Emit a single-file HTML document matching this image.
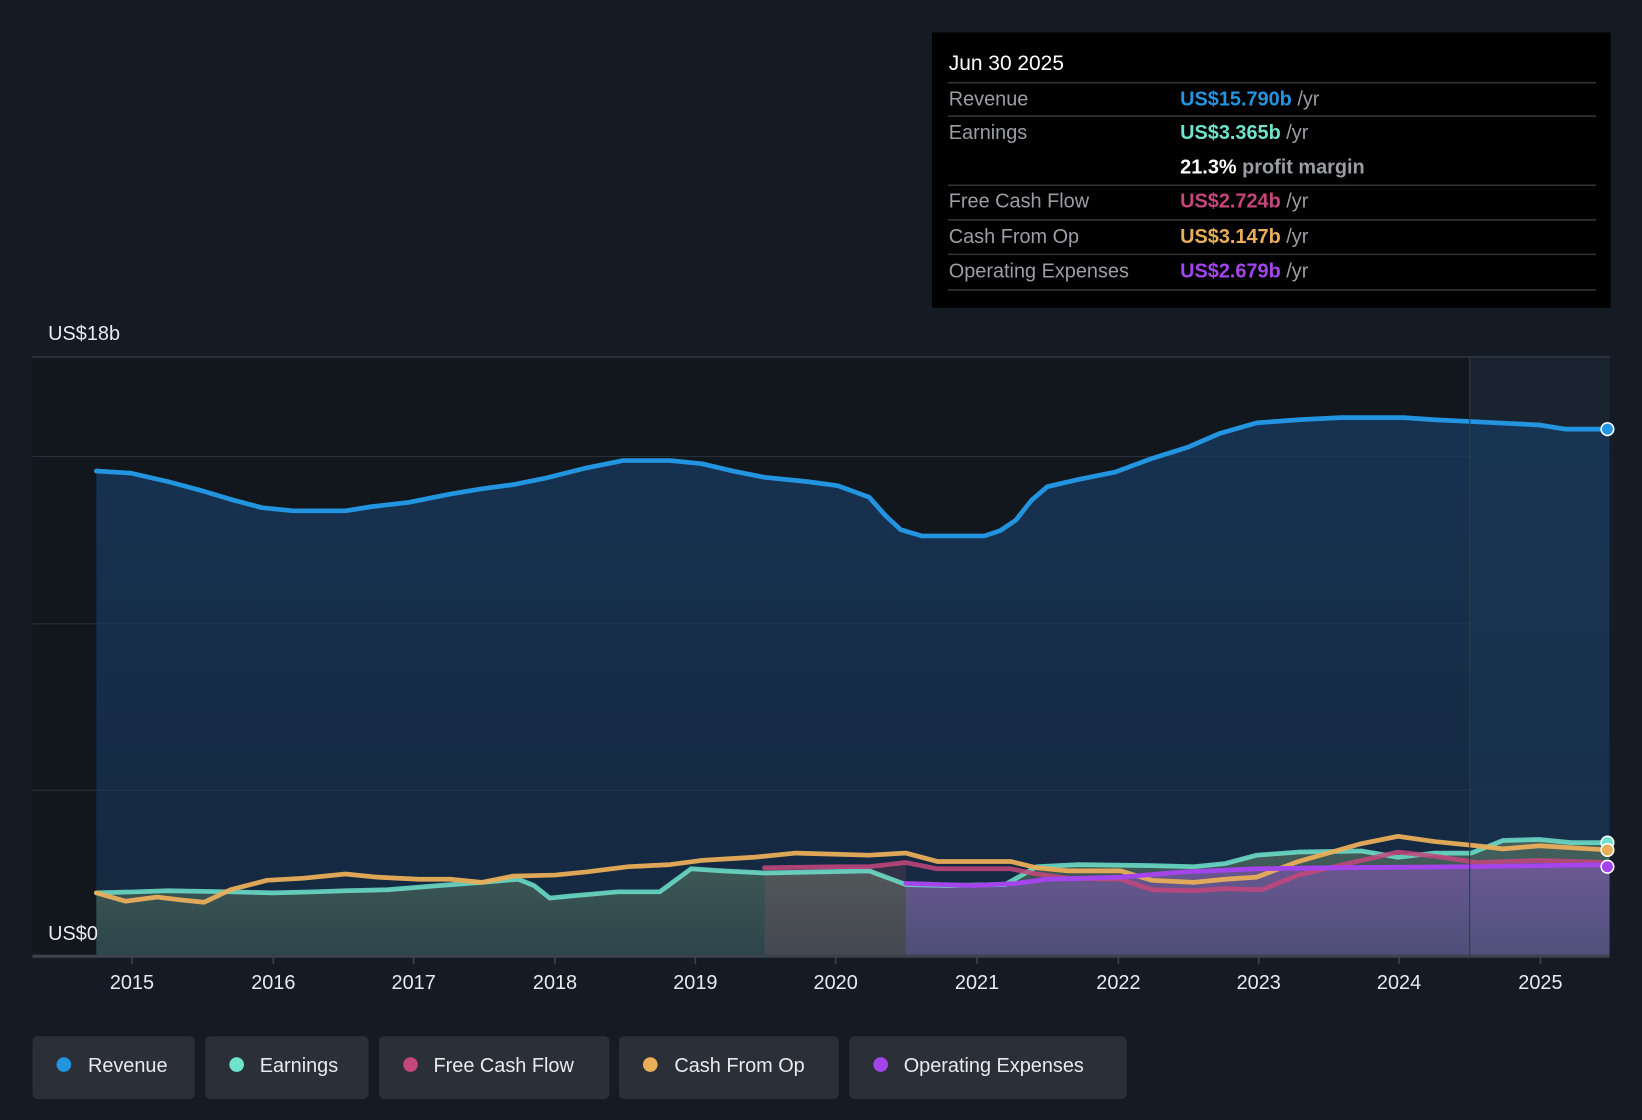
<!DOCTYPE html>
<html><head><meta charset="utf-8"><style>
html,body{margin:0;padding:0;background:#151b24;width:1642px;height:1120px;overflow:hidden}
svg{display:block}
text{font-family:"Liberation Sans",sans-serif}
</style></head><body>
<svg width="1642" height="1120" viewBox="0 0 1568 1070" preserveAspectRatio="none" xmlns="http://www.w3.org/2000/svg">
<defs>
<linearGradient id="gr" x1="0" y1="0" x2="0" y2="1"><stop offset="0" stop-color="#17375a" stop-opacity="0.85"/><stop offset="1" stop-color="#17375a" stop-opacity="0.55"/></linearGradient>
<linearGradient id="ge" x1="0" y1="0" x2="0" y2="1"><stop offset="0" stop-color="#6a8a6c" stop-opacity="0.55"/><stop offset="1" stop-color="#5a7a64" stop-opacity="0.35"/></linearGradient>
<linearGradient id="gp" x1="0" y1="0" x2="0" y2="1"><stop offset="0" stop-color="#9e55d8" stop-opacity="0.45"/><stop offset="1" stop-color="#8a60c8" stop-opacity="0.35"/></linearGradient>
</defs>
<rect width="1568" height="1070" fill="#151b24"/>
<rect x="31" y="341" width="1506" height="572" fill="#12161d"/>
<rect x="1403" y="341" width="134" height="572" fill="#1a2430"/>
<g stroke="#2c333d" stroke-width="1">
<line x1="31" y1="341" x2="1537" y2="341" stroke="#3a414b"/>
<line x1="31" y1="436" x2="1537" y2="436"/>
<line x1="31" y1="596" x2="1537" y2="596"/>
<line x1="31" y1="755" x2="1537" y2="755"/>
</g>
<path id="rev" d="M92,450 L125,452 L160,460 L190,468 L220,477 L250,485 L280,488 L330,488 L355,484 L390,480 L430,472 L460,467 L490,463 L520,457 L560,447 L595,440 L640,440 L670,443 L700,450 L730,456 L770,460 L800,464 L830,475 L845,492 L860,506 L880,512 L940,512 L955,507 L970,497 L985,478 L1000,465 L1030,458 L1065,451 L1100,438 L1135,427 L1165,414 L1200,404 L1240,401 L1280,399 L1340,399 L1370,401 L1410,403 L1470,406 L1495,410 L1535,410" fill="none"/>
<path d="M92,450 L125,452 L160,460 L190,468 L220,477 L250,485 L280,488 L330,488 L355,484 L390,480 L430,472 L460,467 L490,463 L520,457 L560,447 L595,440 L640,440 L670,443 L700,450 L730,456 L770,460 L800,464 L830,475 L845,492 L860,506 L880,512 L940,512 L955,507 L970,497 L985,478 L1000,465 L1030,458 L1065,451 L1100,438 L1135,427 L1165,414 L1200,404 L1240,401 L1280,399 L1340,399 L1370,401 L1410,403 L1470,406 L1495,410 L1537,410 L1537,913 L92,913Z" fill="url(#gr)"/>
<path d="M92,853 L130,852 L160,851 L220,852 L260,853 L300,852 L330,851 L370,850 L420,846 L460,843 L495,840 L510,846 L525,858 L545,856 L590,852 L630,852 L660,830 L690,832 L730,834 L830,832 L865,845 L905,846 L960,845 L990,828 L1030,826 L1100,827 L1140,828 L1170,825 L1200,817 L1240,814 L1300,813 L1335,819 L1370,815 L1405,815 L1435,803 L1470,802 L1500,805 L1537,805 L1537,913 L92,913Z" fill="url(#ge)"/>
<path d="M730,829 L800,828 L830,828 L865,824 L865,913 L730,913Z" fill="#b45a6c" fill-opacity="0.18"/>
<path d="M865,844 L930,846 L970,844 L1000,840 L1070,838 L1130,833 L1200,830 L1270,829 L1400,828 L1537,826 L1537,913 L865,913Z" fill="url(#gp)"/>
<g fill="none" stroke-linejoin="round" stroke-linecap="round">
<path d="M92,853 L130,852 L160,851 L220,852 L260,853 L300,852 L330,851 L370,850 L420,846 L460,843 L495,840 L510,846 L525,858 L545,856 L590,852 L630,852 L660,830 L690,832 L730,834 L830,832 L865,845 L905,846 L960,845 L990,828 L1030,826 L1100,827 L1140,828 L1170,825 L1200,817 L1240,814 L1300,813 L1335,819 L1370,815 L1405,815 L1435,803 L1470,802 L1500,805 L1535,805" stroke="#6fe3cc" stroke-width="4.5" stroke-opacity="0.85"/>
<path d="M730,829 L800,828 L830,828 L865,824 L895,830 L965,830 L990,835 L1020,839 L1070,840 L1100,850 L1140,851 L1170,849 L1205,850 L1240,836 L1300,822 L1335,814 L1370,818 L1410,824 L1470,822 L1535,824" stroke="#c4467c" stroke-width="4.5" stroke-opacity="0.85"/>
<path d="M92,853 L120,861 L150,857 L175,860 L195,862 L220,850 L255,841 L290,839 L330,835 L360,838 L400,840 L430,840 L460,843 L490,837 L530,836 L560,833 L600,828 L640,826 L670,822 L720,819 L760,815 L830,817 L865,815 L895,823 L965,823 L990,829 L1020,832 L1070,832 L1100,841 L1140,843 L1170,840 L1200,838 L1240,823 L1300,806 L1335,799 L1370,804 L1410,808 L1435,811 L1470,808 L1535,812" stroke="#e9ae5a" stroke-width="4.5" stroke-opacity="0.95"/>
<path d="M865,844 L930,846 L970,844 L1000,840 L1070,838 L1130,833 L1200,830 L1270,829 L1400,828 L1535,826" stroke="#a445ec" stroke-width="4.5"/>
<use href="#rev" stroke="#2394df" stroke-width="4.5"/>
</g>
<rect x="1403" y="341" width="1" height="572" fill="#2c3a48"/>
<g stroke="#fff" stroke-width="1.5">
<circle cx="1535" cy="410" r="6" fill="#2394df"/>
<circle cx="1535" cy="805" r="6" fill="#6fe3cc"/>
<circle cx="1535" cy="812" r="6" fill="#e9ae5a"/>
<circle cx="1535" cy="828" r="6" fill="#a445ec"/>
</g>
<rect x="31" y="912" width="1506" height="3" fill="#3d434c"/>
<g stroke="#3d434c" stroke-width="1.5">
<line x1="126" y1="914" x2="126" y2="921"/><line x1="261" y1="914" x2="261" y2="921"/><line x1="395" y1="914" x2="395" y2="921"/><line x1="530" y1="914" x2="530" y2="921"/><line x1="664" y1="914" x2="664" y2="921"/><line x1="798" y1="914" x2="798" y2="921"/><line x1="933" y1="914" x2="933" y2="921"/><line x1="1068" y1="914" x2="1068" y2="921"/><line x1="1202" y1="914" x2="1202" y2="921"/><line x1="1336" y1="914" x2="1336" y2="921"/><line x1="1471" y1="914" x2="1471" y2="921"/>
</g>
<g fill="#e8eaed" font-size="19" text-anchor="middle">
<text x="126" y="945">2015</text><text x="261" y="945">2016</text><text x="395" y="945">2017</text><text x="530" y="945">2018</text><text x="664" y="945">2019</text><text x="798" y="945">2020</text><text x="933" y="945">2021</text><text x="1068" y="945">2022</text><text x="1202" y="945">2023</text><text x="1336" y="945">2024</text><text x="1471" y="945">2025</text>
</g>
<text x="46" y="325" fill="#e8eaed" font-size="19">US$18b</text>
<text x="46" y="898" fill="#e8eaed" font-size="19">US$0</text>
<rect x="890" y="31" width="648" height="263" fill="#000"/>
<text x="906" y="67" fill="#fff" font-size="20">Jun 30 2025</text>
<g stroke="#333" stroke-width="1.5">
<line x1="905" y1="79" x2="1524" y2="79"/><line x1="905" y1="111" x2="1524" y2="111"/><line x1="905" y1="177" x2="1524" y2="177"/><line x1="905" y1="210" x2="1524" y2="210"/><line x1="905" y1="243" x2="1524" y2="243"/><line x1="905" y1="277" x2="1524" y2="277"/>
</g>
<g font-size="19" fill="#9a9ea4">
<text x="906" y="101">Revenue</text>
<text x="906" y="133">Earnings</text>
<text x="906" y="198">Free Cash Flow</text>
<text x="906" y="232">Cash From Op</text>
<text x="906" y="265">Operating Expenses</text>
<text x="1127" y="101"><tspan fill="#2394df" font-weight="bold">US$15.790b</tspan> /yr</text>
<text x="1127" y="133"><tspan fill="#6fe3cc" font-weight="bold">US$3.365b</tspan> /yr</text>
<text x="1127" y="166"><tspan fill="#fff" font-weight="bold">21.3%</tspan> <tspan font-weight="bold">profit margin</tspan></text>
<text x="1127" y="198"><tspan fill="#c4467c" font-weight="bold">US$2.724b</tspan> /yr</text>
<text x="1127" y="232"><tspan fill="#e9ae5a" font-weight="bold">US$3.147b</tspan> /yr</text>
<text x="1127" y="265"><tspan fill="#a445ec" font-weight="bold">US$2.679b</tspan> /yr</text>
</g>
<g fill="#2a2f38">
<rect x="31" y="990" width="155" height="60" rx="5"/>
<rect x="196" y="990" width="156" height="60" rx="5"/>
<rect x="362" y="990" width="220" height="60" rx="5"/>
<rect x="591" y="990" width="210" height="60" rx="5"/>
<rect x="811" y="990" width="265" height="60" rx="5"/>
</g>
<circle cx="61" cy="1017" r="7" fill="#2394df"/>
<circle cx="226" cy="1017" r="7" fill="#6fe3cc"/>
<circle cx="392" cy="1017" r="7" fill="#c4467c"/>
<circle cx="621" cy="1017" r="7" fill="#e9ae5a"/>
<circle cx="841" cy="1017" r="7" fill="#a445ec"/>
<g fill="#e8eaed" font-size="19">
<text x="84" y="1024">Revenue</text>
<text x="248" y="1024">Earnings</text>
<text x="414" y="1024">Free Cash Flow</text>
<text x="644" y="1024">Cash From Op</text>
<text x="863" y="1024">Operating Expenses</text>
</g>
</svg>
</body></html>
